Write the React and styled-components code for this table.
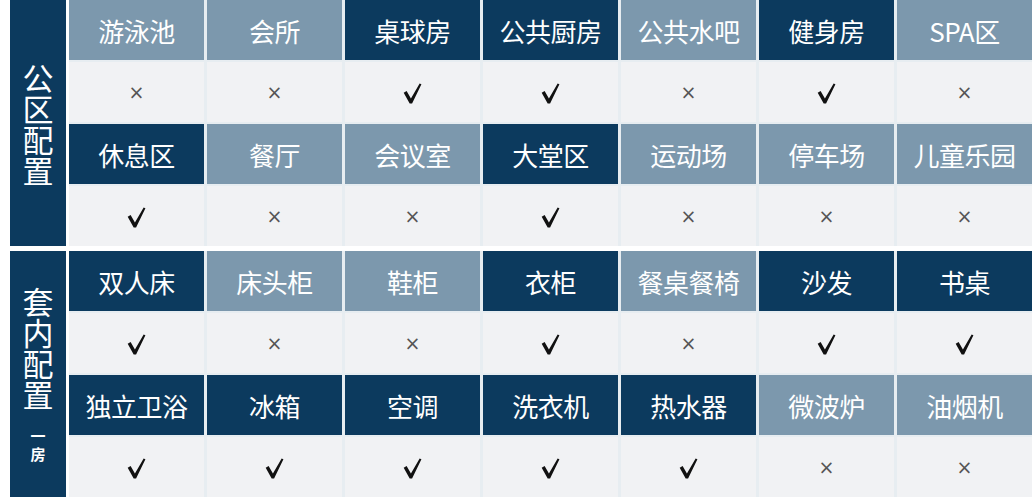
import React from "react";
import styled, { createGlobalStyle } from "styled-components";

const GlobalStyle = createGlobalStyle`
  html, body {
    margin: 0;
    padding: 0;
    background: #ffffff;
    font-family: "Noto Sans CJK SC", "Noto Sans", sans-serif;
  }
`;

const Page = styled.div`
  display: flex;
  flex-direction: column;
  gap: 5px;
  width: 1032px;
  height: 498px;
  padding-left: 10px;
  box-sizing: border-box;
  overflow: hidden;
`;

const Section = styled.section`
  display: flex;
  gap: 3px;
  height: 246px;
`;

const SideLabel = styled.div`
  width: 56px;
  flex-shrink: 0;
  background: #0c3a5e;
  color: #ffffff;
  display: flex;
  flex-direction: column;
  align-items: center;
  justify-content: center;
`;

const BigChar = styled.span`
  font-size: 31px;
  line-height: 31px;
`;

const SmallChar = styled.span`
  font-size: 15px;
  line-height: 18px;
  font-weight: 700;
  margin-top: ${(props) => (props.first ? "18px" : "0")};
`;

const Grid = styled.div`
  flex: 1;
  display: grid;
  grid-template-columns: repeat(7, 1fr);
  grid-auto-rows: 60px;
  column-gap: 3px;
  row-gap: 2px;
  background: #e7edf1;
`;

const HeadCell = styled.div`
  display: flex;
  align-items: center;
  justify-content: center;
  background: ${(props) => (props.dark ? "#0c3a5e" : "#7c98ad")};
  color: #ffffff;
  font-size: 26px;
  letter-spacing: -0.5px;
`;

const ValueCell = styled.div`
  display: flex;
  align-items: center;
  justify-content: center;
  background: #f1f2f4;
  color: #555555;
  font-size: 19px;
  font-family: "DejaVu Sans", sans-serif;
`;

const CheckIcon = styled.svg`
  width: 19px;
  height: 21px;
  margin-top: 2px;
  fill: #111111;
`;

const Check = () => (
  <CheckIcon viewBox="0 0 18 20">
    <path d="M0.6 9.2 L3.4 7.6 L7.5 14.8 L15.8 0.4 L17.5 1.2 L8.6 19.6 L6.3 19.6 Z" />
  </CheckIcon>
);

const sections = [
  {
    title: ["公", "区", "配", "置"],
    sub: [],
    rows: [
      [
        ["游泳池", 0],
        ["会所", 0],
        ["桌球房", 1],
        ["公共厨房", 1],
        ["公共水吧", 0],
        ["健身房", 1],
        ["SPA区", 0],
      ],
      [
        ["休息区", 1],
        ["餐厅", 0],
        ["会议室", 0],
        ["大堂区", 1],
        ["运动场", 0],
        ["停车场", 0],
        ["儿童乐园", 0],
      ],
    ],
  },
  {
    title: ["套", "内", "配", "置"],
    sub: ["一", "房"],
    rows: [
      [
        ["双人床", 1],
        ["床头柜", 0],
        ["鞋柜", 0],
        ["衣柜", 1],
        ["餐桌餐椅", 0],
        ["沙发", 1],
        ["书桌", 1],
      ],
      [
        ["独立卫浴", 1],
        ["冰箱", 1],
        ["空调", 1],
        ["洗衣机", 1],
        ["热水器", 1],
        ["微波炉", 0],
        ["油烟机", 0],
      ],
    ],
  },
];

export default function App() {
  return (
    <>
      <GlobalStyle />
      <Page>
        {sections.map((section, si) => (
          <Section key={si}>
            <SideLabel>
              {section.title.map((c, i) => (
                <BigChar key={i}>{c}</BigChar>
              ))}
              {section.sub.map((c, i) => (
                <SmallChar key={i} first={i === 0}>
                  {c}
                </SmallChar>
              ))}
            </SideLabel>
            <Grid>
              {section.rows.map((row) => (
                <React.Fragment key={row[0][0]}>
                  {row.map(([name, has]) => (
                    <HeadCell key={name} dark={has === 1}>
                      {name}
                    </HeadCell>
                  ))}
                  {row.map(([name, has]) => (
                    <ValueCell key={name + "-v"}>
                      {has ? <Check /> : "×"}
                    </ValueCell>
                  ))}
                </React.Fragment>
              ))}
            </Grid>
          </Section>
        ))}
      </Page>
    </>
  );
}
